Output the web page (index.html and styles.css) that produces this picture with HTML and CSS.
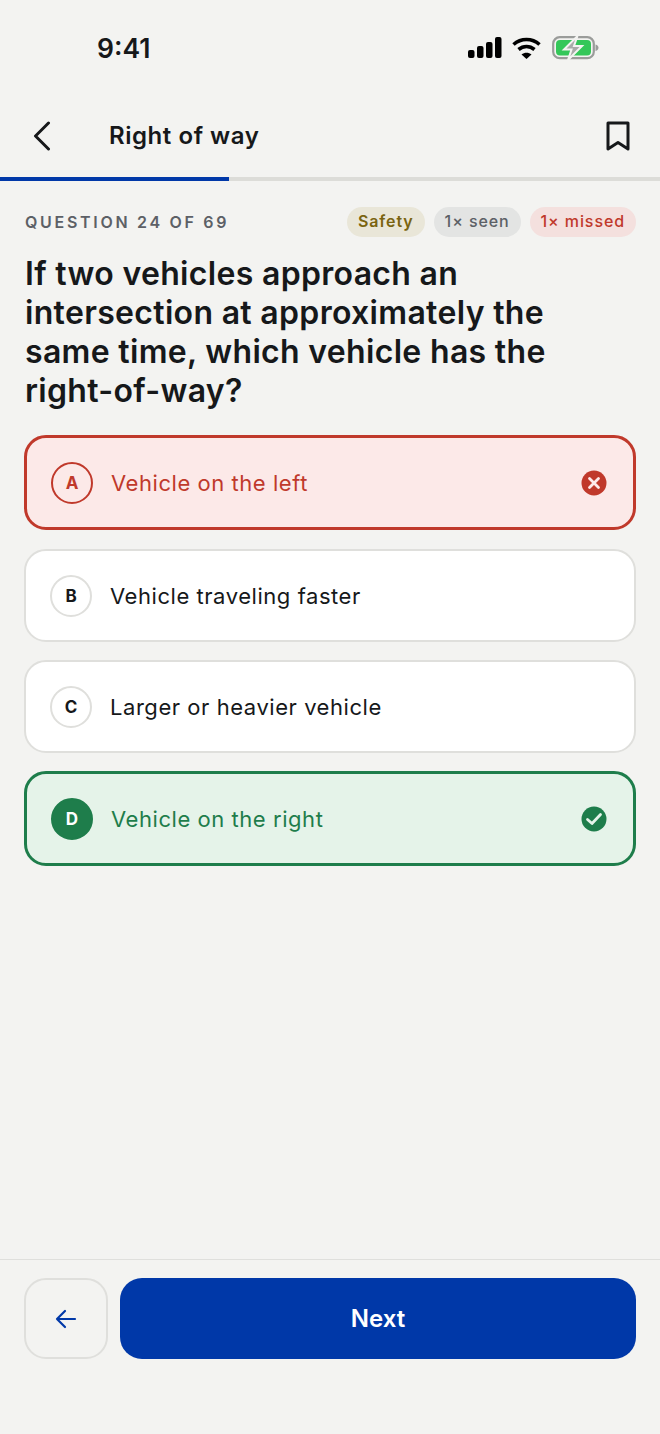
FILE: index.html
```html
<!DOCTYPE html>
<html lang="en">
<head>
  <meta charset="UTF-8">
  <title>Right of way</title>
  <link rel="stylesheet" href="styles.css">
</head>
<body>
  <div class="status-bar">
    <span class="time">9:41</span>
    <div class="status-icons">
      <svg width="34" height="22" viewBox="0 0 34 22" fill="#000">
        <rect x="0" y="13" width="6.5" height="8" rx="2"/>
        <rect x="9" y="9" width="6.5" height="12" rx="2"/>
        <rect x="18" y="5" width="6.5" height="16" rx="2"/>
        <rect x="27" y="0" width="6.5" height="21" rx="2"/>
      </svg>
      <svg class="wifi" width="29" height="22" viewBox="0 0 29 22" fill="none" stroke="#000" stroke-width="3.6">
        <path d="M1.5 7.5C9 .8 20 .8 27.5 7.5"/>
        <path d="M6.5 12.5c4.8-4 11.200-4 16 0"/>
        <path d="M9.500 17.500L14.500 22l5-4.500c-3-2.400-7-2.400-10 0z" fill="#000" stroke="none"/>
      </svg>
      <svg class="battery" width="47" height="24" viewBox="0 0 47 24">
        <rect x="1.200" y="1.200" width="40.600" height="21" rx="6.500" fill="none" stroke="#9a9c9a" stroke-width="2.200"/>
        <rect x="4" y="4" width="35" height="15.500" rx="4" fill="#34c759"/>
        <path d="M43.500 8.500c2 .5 3 1.800 3 3.300s-1 2.700-3 3.200z" fill="#9a9c9a"/>
        <path d="M25.500 0L12 13.500h7.500L16 24l14-14h-8z" fill="#a9aba9" stroke="#f3f3f1" stroke-width="2"/>
      </svg>
    </div>
  </div>

  <header class="nav">
    <svg class="nav-back" width="20" height="30" viewBox="0 0 20 30" fill="none" stroke="#16181a" stroke-width="3" stroke-linecap="round" stroke-linejoin="round">
      <path d="M16.500 2L3.500 15l13 13"/>
    </svg>
    <h1 class="nav-title">Right of way</h1>
    <svg class="bookmark" width="24" height="30" viewBox="0 0 24 30" fill="none" stroke="#16181a" stroke-width="3" stroke-linejoin="round">
      <path d="M2 2h20v26l-10-6.500L2 28z"/>
    </svg>
  </header>

  <div class="progress"><div class="progress-fill"></div></div>

  <main class="content">
    <div class="meta">
      <span class="counter">QUESTION 24 OF 69</span>
      <div class="tags">
        <span class="tag tag-topic">Safety</span>
        <span class="tag tag-seen">1× seen</span>
        <span class="tag tag-missed">1× missed</span>
      </div>
    </div>

    <h2 class="question">If two vehicles approach an intersection at approximately the same time, which vehicle has the right-of-way?</h2>

    <div class="options">
      <div class="option wrong">
        <span class="letter">A</span>
        <span class="option-text">Vehicle on the left</span>
        <svg class="mark" width="26" height="26" viewBox="0 0 26 26">
          <circle cx="13" cy="13" r="12.500" fill="#c0392b"/>
          <path d="M8.500 8.500l9 9M17.500 8.500l-9 9" stroke="#fdeaea" stroke-width="2.800" stroke-linecap="round"/>
        </svg>
      </div>
      <div class="option">
        <span class="letter">B</span>
        <span class="option-text">Vehicle traveling faster</span>
      </div>
      <div class="option">
        <span class="letter">C</span>
        <span class="option-text">Larger or heavier vehicle</span>
      </div>
      <div class="option right">
        <span class="letter">D</span>
        <span class="option-text">Vehicle on the right</span>
        <svg class="mark" width="26" height="26" viewBox="0 0 26 26" fill="none">
          <circle cx="13" cy="13" r="12.500" fill="#1e7d4b"/>
          <path d="M6.500 13.500l4.500 4 8.500-9" stroke="#e5f3e9" stroke-width="2.800" stroke-linecap="round" stroke-linejoin="round"/>
        </svg>
      </div>
    </div>
  </main>

  <footer class="footer">
    <button class="btn-prev">
      <svg width="22" height="20" viewBox="0 0 22 20" fill="none" stroke="#0038a8" stroke-width="2.200" stroke-linecap="round" stroke-linejoin="round">
        <path d="M20 10H2M10 2l-8 8 8 8"/>
      </svg>
    </button>
    <button class="btn-next">Next</button>
  </footer>
</body>
</html>
```

FILE: styles.css
```css
* { box-sizing: border-box; }
html, body { margin: 0; padding: 0; }
body { width: 660px; height: 1434px; background: #f3f3f1; color: #16181a; font-family: Inter, "Liberation Sans", sans-serif; display: flex; flex-direction: column; overflow: hidden; }

.status-bar { height: 95px; padding: 0 62px 0 97px; display: flex; align-items: center; justify-content: space-between; }
.time { font-size: 26.500px; font-weight: 600; }
.status-icons { display: flex; align-items: center; gap: 10px; padding-top: 1px; }
.status-icons svg { display: block; }
.wifi { margin-right: 1px; }
.battery { margin-right: -1px; }

.nav { height: 82px; padding: 0 30px 0 32px; display: flex; align-items: center; }
.nav-back { margin-right: 57px; }
.nav-title { margin: 0 0 2px; flex: 1; font-size: 24px; font-weight: 600; letter-spacing: 0.55px; }

.progress { height: 4px; background: #dcdcd8; }
.progress-fill { width: 229px; height: 100%; background: #0038a8; }

.content { flex: 1; padding: 26px 24px 0 25px; }
.meta { display: flex; align-items: center; justify-content: space-between; height: 30px; }
.counter { font-size: 16px; font-weight: 600; letter-spacing: 2.700px; color: #5c6066; }
.tags { display: flex; gap: 9px; }
.tag { height: 30px; padding: 0 11px; border-radius: 15px; font-size: 16px; font-weight: 600; letter-spacing: 0.9px; line-height: 29px; }
.tag-topic { background: #e9e6d8; color: #7a6410; }
.tag-seen { background: #e3e4e3; color: #5c6066; font-weight: 500; }
.tag-missed { background: #f4e0de; color: #c0392b; font-weight: 500; }

.question { max-width: 540px; margin: 17px 0 25px; font-size: 32px; line-height: 39px; font-weight: 600; letter-spacing: 0.32px; }

.options { display: flex; flex-direction: column; gap: 18px; margin-left: -1px; }
.option { display: flex; align-items: center; gap: 18px; height: 93px; padding: 0 24px; background: #fff; border: 2px solid #dfdfdc; border-radius: 22px; }
.letter { width: 42px; height: 42px; flex: none; display: flex; align-items: center; justify-content: center; background: #fff; border: 2px solid #dfdfdc; border-radius: 50%; font-size: 17px; font-weight: 700; }
.option-text { flex: 1; font-size: 22px; letter-spacing: 0.55px; }
.mark { display: block; margin-right: 2px; }

.option.wrong, .option.right { height: 95px; border-width: 3px; }
.option.wrong { margin-bottom: 1px; background: #fce9e8; border-color: #c0392b; color: #c0392b; }
.option.wrong .letter { background: transparent; border-color: #c0392b; border-width: 2.500px; }
.option.right { background: #e5f3e9; border-color: #1e7d4b; color: #1e7d4b; }
.option.right .letter { background: #1e7d4b; border-color: #1e7d4b; color: #fff; }

.footer { height: 175px; padding: 18px 24px 0; display: flex; gap: 12px; border-top: 1px solid #dfdfdc; }
.btn-prev { width: 84px; height: 81px; display: flex; align-items: center; justify-content: center; padding: 0; background: #f3f3f1; border: 2px solid #dfdfdc; border-radius: 22px; }
.btn-next { flex: 1; height: 81px; background: #0038a8; border: 0; border-radius: 22px; color: #fff; font-family: inherit; font-size: 24px; font-weight: 600; }
```
